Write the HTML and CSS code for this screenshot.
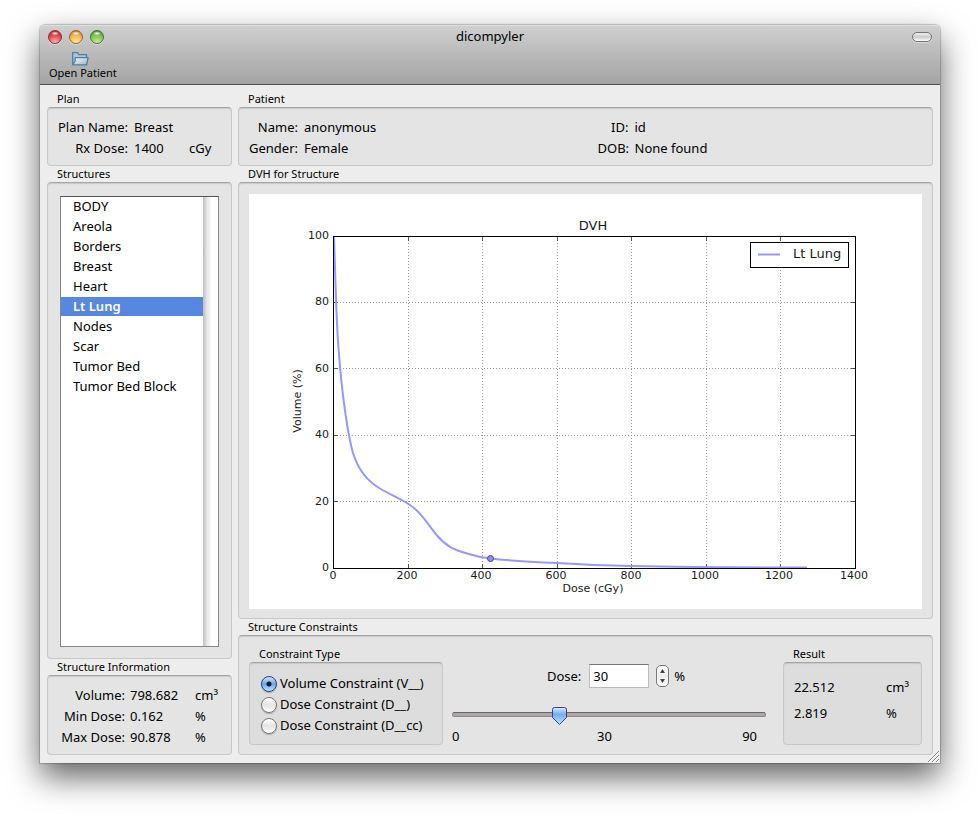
FILE: index.html
```html
<!DOCTYPE html>
<html lang="en">
<head>
<meta charset="utf-8">
<title>dicompyler</title>
<link rel="stylesheet" href="styles.css">
</head>
<body>
<div class="window">
  <header class="titlebar">
    <div class="title-row">
      <div class="lights">
        <button class="light red" aria-label="Close"></button>
        <button class="light amber" aria-label="Minimize"></button>
        <button class="light green" aria-label="Zoom"></button>
      </div>
      <h1>dicompyler</h1>
      <button class="pill" aria-label="Toggle toolbar"></button>
    </div>
    <button class="tool">
      <svg width="17" height="14" viewBox="0 0 17 14" aria-hidden="true">
        <defs><linearGradient id="folder" x1="0" y1="0" x2="1" y2="1"><stop offset="0" stop-color="#f4f7fb"/><stop offset="1" stop-color="#9db4cf"/></linearGradient></defs>
        <path d="M.7 12.8V.7h4.8l1.3 2h7.7v3" fill="#b4c3d3" stroke="#4d7ea8" stroke-width="1.3"/>
        <path d="M.7 12.8 3.2 9V5.7h12.9l-1.5 7.1z" fill="url(#folder)" stroke="#4d7ea8" stroke-width="1.3" stroke-linejoin="round"/>
      </svg>
      <span>Open Patient</span>
    </button>
  </header>

  <main class="content">
    <div class="column side">
      <section class="group plan">
        <h2>Plan</h2>
        <dl class="box facts plan-facts">
          <dt>Plan Name:</dt><dd>Breast</dd><dd></dd>
          <dt>Rx Dose:</dt><dd>1400</dd><dd>cGy</dd>
        </dl>
      </section>
      <section class="group grow">
        <h2><label for="structures">Structures</label></h2>
        <div class="box list-box">
          <div class="list">
            <select id="structures" size="10">
              <option>BODY</option>
              <option>Areola</option>
              <option>Borders</option>
              <option>Breast</option>
              <option>Heart</option>
              <option selected>Lt Lung</option>
              <option>Nodes</option>
              <option>Scar</option>
              <option>Tumor Bed</option>
              <option>Tumor Bed Block</option>
            </select>
            <div class="track"></div>
          </div>
        </div>
      </section>
      <section class="group">
        <h2>Structure Information</h2>
        <dl class="box facts info-facts">
          <dt>Volume:</dt><dd>798.682</dd><dd>cm³</dd>
          <dt>Min Dose:</dt><dd>0.162</dd><dd>%</dd>
          <dt>Max Dose:</dt><dd>90.878</dd><dd>%</dd>
        </dl>
      </section>
    </div>

    <div class="column main">
      <section class="group plan">
        <h2>Patient</h2>
        <dl class="box facts patient-facts">
          <dt>Name:</dt><dd>anonymous</dd><dt>ID:</dt><dd>id</dd>
          <dt>Gender:</dt><dd>Female</dd><dt>DOB:</dt><dd>None found</dd>
        </dl>
      </section>

      <section class="group grow">
        <h2>DVH for Structure</h2>
        <div class="box chart-box">
          <svg class="chart" viewBox="0 0 673 415" role="img" aria-label="DVH">
            <g class="grid">
              <path d="M159.500 374V43M233.500 374V43M308.500 374V43M382.500 374V43M457.500 374V43M531.500 374V43"/>
              <path d="M85 108.500H606M85 174.500H606M85 241.500H606M85 307.500H606"/>
            </g>
            <path class="ticks" d="M159.500 374v-4M233.500 374v-4M308.500 374v-4M382.500 374v-4M457.500 374v-4M531.500 374v-4M159.500 43v4M233.500 43v4M308.500 43v4M382.500 43v4M457.500 43v4M531.500 43v4M85 108.500h4M85 174.500h4M85 241.500h4M85 307.500h4M606 108.500h-4M606 174.500h-4M606 241.500h-4M606 307.500h-4"/>
            <path class="curve" d="M85 42C86 66 87 130 90 160C92 190 98 238 104 259C109 275 118 287 131 294.500C140 300 150 304 159.500 310C171 317 178 329 188 341.500C197 352 205 356 218 359.500C226 362 233 363.500 241.500 364.500C258 366.500 285 368 308 369C333 370.500 358 371.500 383 372C430 373 500 373.500 558 373.500"/>
            <rect class="frame" x="84.500" y="42.500" width="522" height="332"/>
            <circle class="marker" cx="241.500" cy="364.500" r="3"/>
            <rect class="legend" x="501.500" y="48.500" width="98" height="25"/>
            <path class="curve" d="M509 60.500h22"/>
            <text class="large" x="544" y="64">Lt Lung</text>
            <text class="large mid" x="344" y="36">DVH</text>
            <g class="end">
              <text x="80" y="45">100</text><text x="80" y="111">80</text><text x="80" y="178">60</text>
              <text x="80" y="244">40</text><text x="80" y="311">20</text><text x="80" y="377">0</text>
            </g>
            <g class="mid">
              <text x="84" y="385">0</text><text x="158" y="385">200</text><text x="232" y="385">400</text>
              <text x="307" y="385">600</text><text x="382" y="385">800</text><text x="456" y="385">1000</text>
              <text x="530" y="385">1200</text><text x="605" y="385">1400</text>
              <text x="344" y="398">Dose (cGy)</text>
              <text transform="translate(52 207) rotate(-90)">Volume (%)</text>
            </g>
          </svg>
        </div>
      </section>

      <section class="group">
        <h2>Structure Constraints</h2>
        <div class="box constraints">
          <fieldset class="group type">
            <legend>Constraint Type</legend>
            <div class="box inner radios">
              <label><input type="radio" name="type" checked>Volume Constraint (V__)</label>
              <label><input type="radio" name="type">Dose Constraint (D__)</label>
              <label><input type="radio" name="type">Dose Constraint (D__cc)</label>
            </div>
          </fieldset>
          <div class="dose">
            <div class="dose-row">
              <label for="dose">Dose:</label>
              <input id="dose" class="number" type="text" value="30">
              <span class="spinner">
                <button aria-label="Increase"><svg width="5" height="4" viewBox="0 0 5 4"><path d="M2.500 0 5 4H0z"/></svg></button>
                <button aria-label="Decrease"><svg width="5" height="4" viewBox="0 0 5 4"><path d="M2.500 4 5 0H0z"/></svg></button>
              </span>
              <span>%</span>
            </div>
            <input class="slider" type="range" min="0" max="90" value="30" aria-label="Dose">
            <div class="scale"><span>0</span><span>30</span><span>90</span></div>
          </div>
          <section class="group result">
            <h2>Result</h2>
            <dl class="box inner result-facts">
              <dd>22.512</dd><dd>cm³</dd>
              <dd>2.819</dd><dd>%</dd>
            </dl>
          </section>
        </div>
      </section>
    </div>
  </main>
  <svg class="grip" width="11" height="11" viewBox="0 0 11 11" aria-hidden="true">
    <path d="M1 11 11 1M5 11l6-6M9 11l2-2" stroke="#fff"/>
    <path d="M0 11 11 0M4 11l7-7M8 11l3-3" stroke="#888"/>
  </svg>
</div>
</body>
</html>
```
FILE: styles.css
```css
* { box-sizing: border-box; }

body {
  margin: 0;
  min-height: 100vh;
  padding: 25px 40px 55px;
  display: flex;
  background: #fff;
  color: #000;
  font: 13px/21px "Noto Sans", "Open Sans", sans-serif;
}

h1, h2, dl, dd, fieldset, legend { margin: 0; padding: 0; border: 0; font: inherit; }
button, input, select { font: inherit; color: inherit; margin: 0; padding: 0; }

.window {
  position: relative;
  flex: 1;
  min-width: 0;
  display: flex;
  flex-direction: column;
  background: #ededed;
  border-radius: 5px 5px 0 0;
  box-shadow: 0 0 1px 1px rgba(0, 0, 0, .2), 0 14px 32px rgba(0, 0, 0, .62);
}

/* Title bar and toolbar */
.titlebar {
  height: 60px;
  border-radius: 5px 5px 0 0;
  border-top: 1px solid #dedede;
  border-bottom: 1px solid #505050;
  background: linear-gradient(#cfcfcf, #a4a4a4);
}
.title-row {
  display: grid;
  grid-template-columns: 1fr auto 1fr;
  align-items: center;
  height: 20px;
  padding: 0 8px;
}
.lights { display: flex; gap: 7px; }
.light {
  width: 14px;
  height: 14px;
  border: 1px solid;
  border-radius: 50%;
  box-shadow: 0 1px 0 rgba(255, 255, 255, .4);
}
.red { border-color: #8b3034; background: radial-gradient(ellipse 4px 2px at 50% 20%, #fff, transparent), radial-gradient(circle at 50% 100%, #ffb9b9, #e4444a 60%, #a71c22); }
.amber { border-color: #9a5f2e; background: radial-gradient(ellipse 4px 2px at 50% 20%, #fff, transparent), radial-gradient(circle at 50% 100%, #fff08c, #f0b451 60%, #b9692a); }
.green { border-color: #44762f; background: radial-gradient(ellipse 4px 2px at 50% 20%, #fff, transparent), radial-gradient(circle at 50% 100%, #ccf394, #7fbf55 60%, #3d7d2b); }
.pill {
  justify-self: end;
  width: 20px;
  height: 10px;
  border: 1px solid #737373;
  border-radius: 5px;
  background: linear-gradient(#eee, #ccc 50%, #fff);
  box-shadow: 0 1px 0 rgba(255, 255, 255, .4);
}
.tool {
  display: flex;
  flex-direction: column;
  align-items: flex-start;
  margin: 6px 0 0 9px;
  border: 0;
  background: none;
  font-size: 11px;
  line-height: 14px;
}
.tool svg { margin-left: 23px; }

/* Panels */
.content {
  flex: 1;
  display: flex;
  gap: 6px;
  padding: 6px 7px 8px;
}
.column { display: flex; flex-direction: column; min-width: 0; }
.side { flex: 0 0 185px; }
.main { flex: 1; }
.group { display: flex; flex-direction: column; min-width: 0; }
.plan { height: 75px; }
.grow { flex: 1; }
.group > h2, .group > legend {
  padding-left: 10px;
  font-size: 11px;
  line-height: 16px;
}
.box {
  flex: 1;
  border: 1px solid #c8c8c8;
  border-top-color: #a6a6a6;
  border-radius: 4px;
  background: #e4e4e4;
  box-shadow: inset 0 1px 1px #c8c8c8;
}
.inner { background: #ddd; }

.facts {
  display: grid;
  align-content: start;
  column-gap: 6px;
  padding: 9px 10px 6px;
  white-space: nowrap;
}
.facts dt { text-align: right; }
.plan-facts { grid-template-columns: 70px 49px 1fr; }
.info-facts { grid-template-columns: 67px 60px 1fr; column-gap: 5px; }
.patient-facts { grid-template-columns: 49px 1fr 31px 1fr; }

/* Structure list */
.list-box { display: flex; padding: 13px 12px 11px; }
.list {
  flex: 1;
  display: flex;
  min-width: 0;
  border: 1px solid #888;
  border-top-color: #555;
  background: #fff;
}
.list select {
  flex: 1;
  min-width: 0;
  border: 0;
  border-radius: 0;
  outline: 0;
  background: #fff;
  overflow: hidden;
}
.list option {
  min-height: 20px;
  padding: 0 0 1px 12px;
  line-height: 19px;
}
.list option:checked {
  background: linear-gradient(#5787de, #5787de) 0 0 / 100% 19px no-repeat;
  color: #fff;
  font-weight: 600;
}
.track {
  width: 15px;
  background: linear-gradient(90deg, #bdbdbd, #e6e6e6 4px, #fff 9px, #fff);
}

/* Chart */
.chart-box { display: flex; padding: 11px 10px 9px; }
.chart {
  flex: 1;
  min-width: 0;
  background: #fff;
  fill: #1a1a1a;
  font: 11px "DejaVu Sans", sans-serif;
}
.chart path, .chart rect { fill: none; }
.chart .grid path { stroke: #999; stroke-dasharray: 1 2; }
.chart .ticks { stroke: #555; }
.chart .frame { stroke: #000; }
.chart .legend { fill: #fff; stroke: #000; }
.chart .curve { stroke: #9896ff; stroke-width: 2; }
.chart .marker { fill: #8d8bf0; stroke: #444485; }
.chart .large { font-size: 13px; }
.mid { text-anchor: middle; }
.end { text-anchor: end; }

/* Constraints */
.constraints { display: flex; padding: 10px 10px 9px; }
.type { flex: 0 0 194px; }
.radios { padding: 10px 11px 8px; }
.radios label { display: flex; align-items: center; gap: 3px; white-space: nowrap; }
.radios input {
  appearance: none;
  flex: none;
  width: 16px;
  height: 16px;
  border: 1px solid #777;
  border-radius: 50%;
  background: linear-gradient(#fff, #e4e4e4 50%, #fff);
  box-shadow: 0 1px 1px rgba(0, 0, 0, .25);
}
.radios input:checked {
  border-color: #2c3c88;
  background: radial-gradient(circle, #101c38 2px, transparent 3px), linear-gradient(#d5e4f8, #6ba3e8 50%, #b9eaff);
}
.dose { flex: 1; min-width: 0; padding: 18px 17px 0 9px; }
.dose-row {
  display: flex;
  justify-content: center;
  align-items: center;
  height: 24px;
  padding-left: 14px;
}
.number {
  width: 60px;
  height: 24px;
  margin: 0 7px 0 8px;
  padding: 0 3px;
  border: 1px solid #bbb;
  border-top-color: #777;
  border-radius: 0;
  background: #fff;
}
.spinner {
  display: flex;
  flex-direction: column;
  width: 13px;
  height: 22px;
  margin-right: 5px;
  border: 1px solid #777;
  border-radius: 5px;
  background: linear-gradient(#fff, #eee 50%, #fff);
}
.spinner button {
  flex: 1;
  display: flex;
  align-items: center;
  justify-content: center;
  border: 0;
  background: none;
}
.spinner path { fill: #444; }
.slider {
  appearance: none;
  display: block;
  width: 100%;
  height: 24px;
  margin-top: 14px;
  background: none;
}
.slider::-webkit-slider-runnable-track {
  height: 5px;
  border: 1px solid #8f8888;
  border-top-color: #6e6363;
  border-radius: 3px;
  background: #aba8a8;
}
.slider::-webkit-slider-thumb {
  appearance: none;
  width: 15px;
  height: 18px;
  margin-top: -6px;
  background: url("data:image/svg+xml,%3Csvg xmlns='http://www.w3.org/2000/svg' viewBox='0 0 15 18'%3E%3ClinearGradient id='g' x2='0' y2='1'%3E%3Cstop stop-color='%23dceafa'/%3E%3Cstop offset='.4' stop-color='%2375aeed'/%3E%3Cstop offset='1' stop-color='%23b8e4ff'/%3E%3C/linearGradient%3E%3Cpath d='M2.500 .5h10q2 0 2 2v8l-7 7-7-7v-8q0-2 2-2z' fill='url(%23g)' stroke='%233c3c9c'/%3E%3C/svg%3E") no-repeat;
}
.scale {
  display: grid;
  grid-template-columns: 1fr auto 1fr;
  margin-top: 3px;
  padding-right: 9px;
  line-height: 15px;
}
.scale :last-child { text-align: right; }
.result { flex: 0 0 139px; }
.result-facts {
  display: grid;
  grid-template-columns: 86px 1fr;
  column-gap: 6px;
  align-content: start;
  padding: 11px 10px;
  line-height: 26px;
}

.grip { position: absolute; right: 1px; bottom: 1px; }
```
